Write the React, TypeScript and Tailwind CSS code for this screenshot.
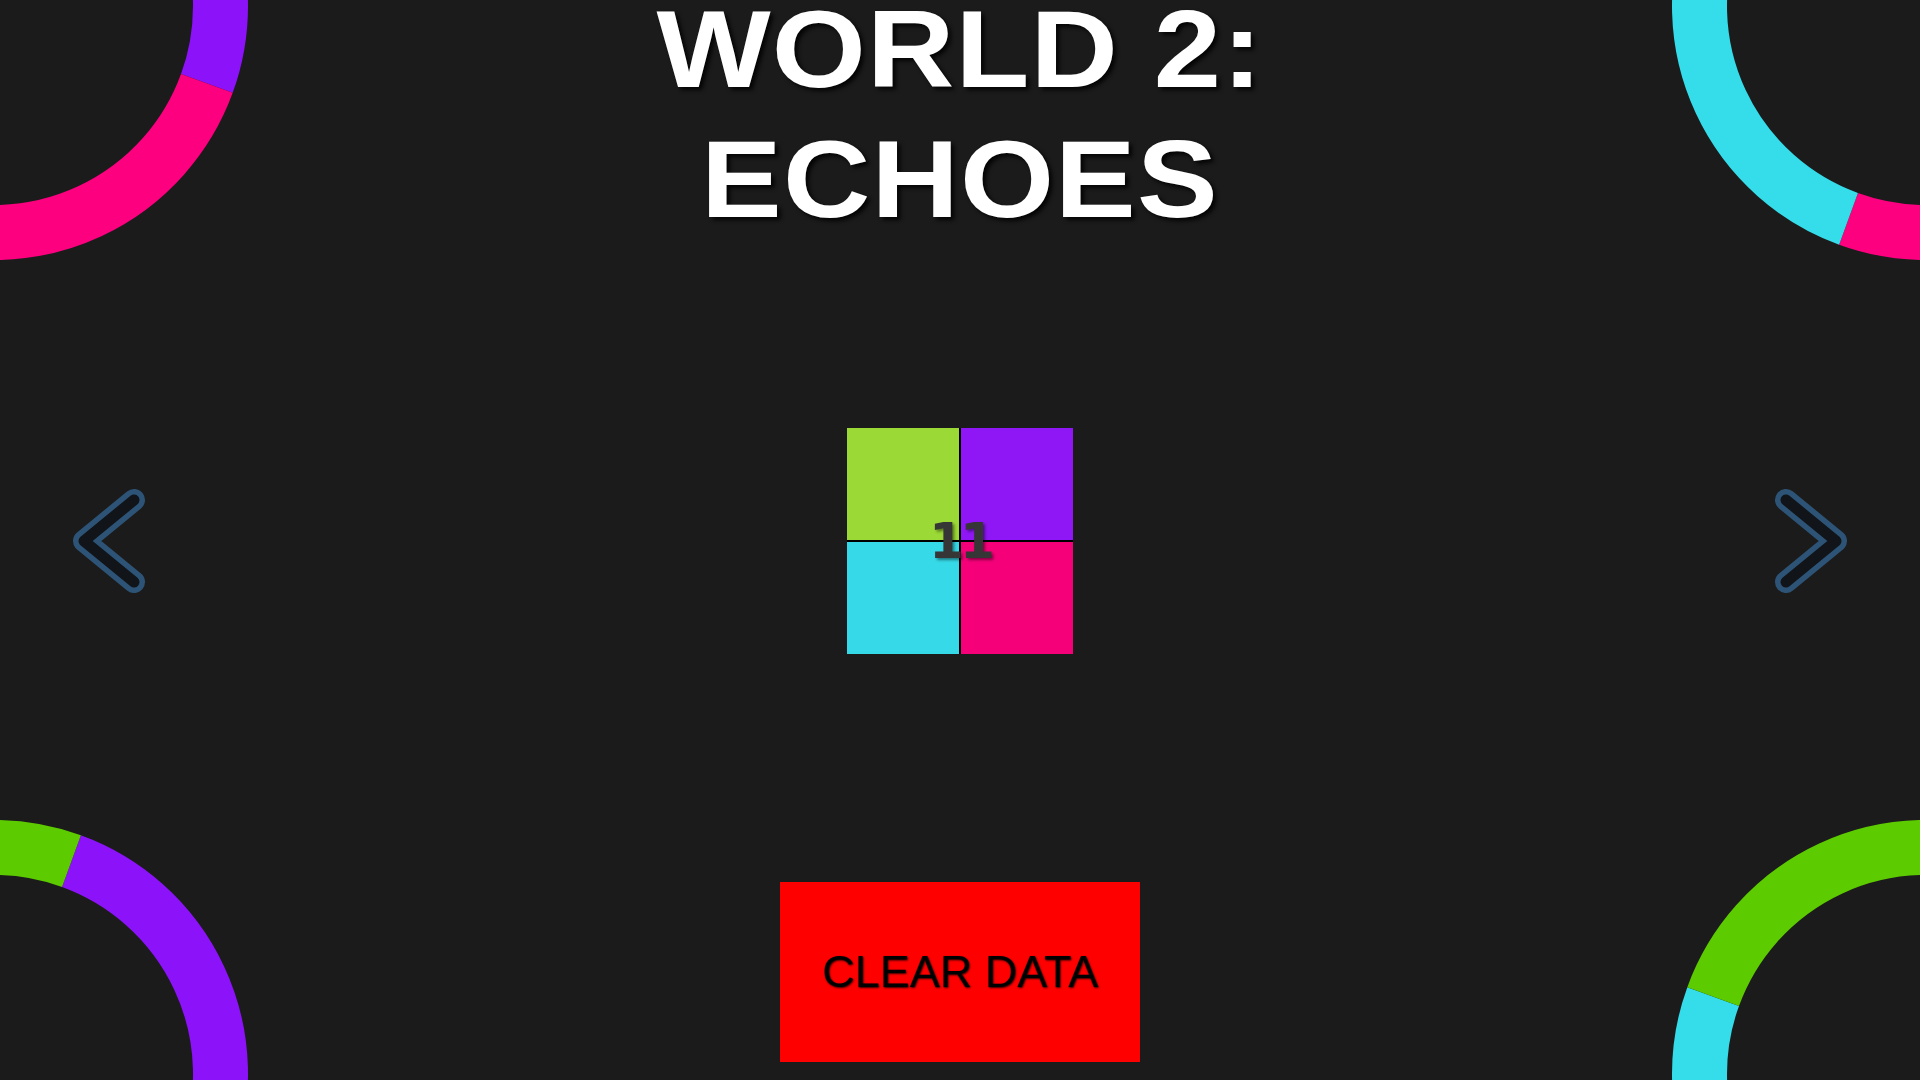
import React from "react";

// ring segments, degrees clockwise from +x (screen coords)
const RING_SEGMENTS = [
  { from: -70, to: 20, color: "#8c13f9" },
  { from: 20, to: 110, color: "#fd0080" },
  { from: 110, to: 200, color: "#35dcea" },
  { from: 200, to: 290, color: "#5ccb00" },
];

const RING_CENTERS = [
  { cx: -6, cy: 6 },
  { cx: 1926, cy: 6 },
  { cx: -6, cy: 1074 },
  { cx: 1926, cy: 1074 },
];

function arcPath(cx: number, cy: number, r: number, a0: number, a1: number) {
  const rad = (a: number) => (a * Math.PI) / 180;
  const x0 = cx + r * Math.cos(rad(a0));
  const y0 = cy + r * Math.sin(rad(a0));
  const x1 = cx + r * Math.cos(rad(a1));
  const y1 = cy + r * Math.sin(rad(a1));
  const large = a1 - a0 > 180 ? 1 : 0;
  return `M ${x0} ${y0} A ${r} ${r} 0 ${large} 1 ${x1} ${y1}`;
}

function CornerRings() {
  return (
    <svg
      className="absolute inset-0 pointer-events-none"
      width="1920"
      height="1080"
      viewBox="0 0 1920 1080"
    >
      {RING_CENTERS.map((c, i) => (
        <g key={i}>
          {RING_SEGMENTS.map((s, j) => (
            <path
              key={j}
              d={arcPath(c.cx, c.cy, 226.5, s.from, s.to)}
              stroke={s.color}
              strokeWidth={55}
              fill="none"
            />
          ))}
        </g>
      ))}
    </svg>
  );
}

function Chevron({ dir }: { dir: "left" | "right" }) {
  const d = dir === "left" ? "M 70 14 L 20 55 L 70 96" : "M 20 14 L 70 55 L 20 96";
  return (
    <svg width="90" height="110" viewBox="0 0 90 110" className="shrink-0">
      <path d={d} stroke="#2d5476" strokeWidth={22} fill="none" strokeLinecap="round" strokeLinejoin="round" />
      <path d={d} stroke="#111418" strokeWidth={11} fill="none" strokeLinecap="round" strokeLinejoin="round" />
    </svg>
  );
}

export default function App() {
  return (
    <div className="relative w-full h-[1080px] overflow-hidden bg-[#1b1b1b]">
      <CornerRings />

      <div className="relative flex flex-col items-center h-full">
        {/* Title */}
        <h1
          className="h-[244px] text-center text-white font-bold text-[110px] leading-[98px] [text-shadow:3px_3px_4px_rgba(0,0,0,0.85)]"
          style={{ fontFamily: '"Liberation Sans", Arial, sans-serif' }}
        >
          <div className="scale-x-[1.1] tracking-[1px]">WORLD 2:</div>
          <div className="mt-8 scale-x-[1.1] tracking-[1px]">ECHOES</div>
        </h1>

        {/* Level picker row */}
        <div className="mt-[184px] w-full flex items-center justify-between px-[64px]">
          <Chevron dir="left" />

          <div className="relative w-[226px] h-[226px]">
            <div className="grid grid-cols-2 grid-rows-2 gap-[2px] w-full h-full bg-black">
              <div className="bg-[#9bd936]" />
              <div className="bg-[#8f17f5]" />
              <div className="bg-[#36d9e8]" />
              <div className="bg-[#f6007a]" />
            </div>
            <div
              className="absolute inset-0 flex items-center justify-center text-[50px] font-bold text-[#363636] tracking-[-4px] [text-shadow:2px_2px_3px_rgba(0,0,0,0.45)]"
              style={{ fontFamily: '"DejaVu Sans", sans-serif' }}
            >
              11
            </div>
          </div>

          <Chevron dir="right" />
        </div>

        {/* Clear data */}
        <button
          className="mt-[228px] w-[360px] h-[180px] bg-[#ff0000] flex items-center justify-center text-black text-[45px] [text-shadow:1px_1px_2px_rgba(0,0,0,0.8)]"
          style={{ fontFamily: '"Liberation Sans", Arial, sans-serif' }}
        >
          CLEAR DATA
        </button>
      </div>
    </div>
  );
}
